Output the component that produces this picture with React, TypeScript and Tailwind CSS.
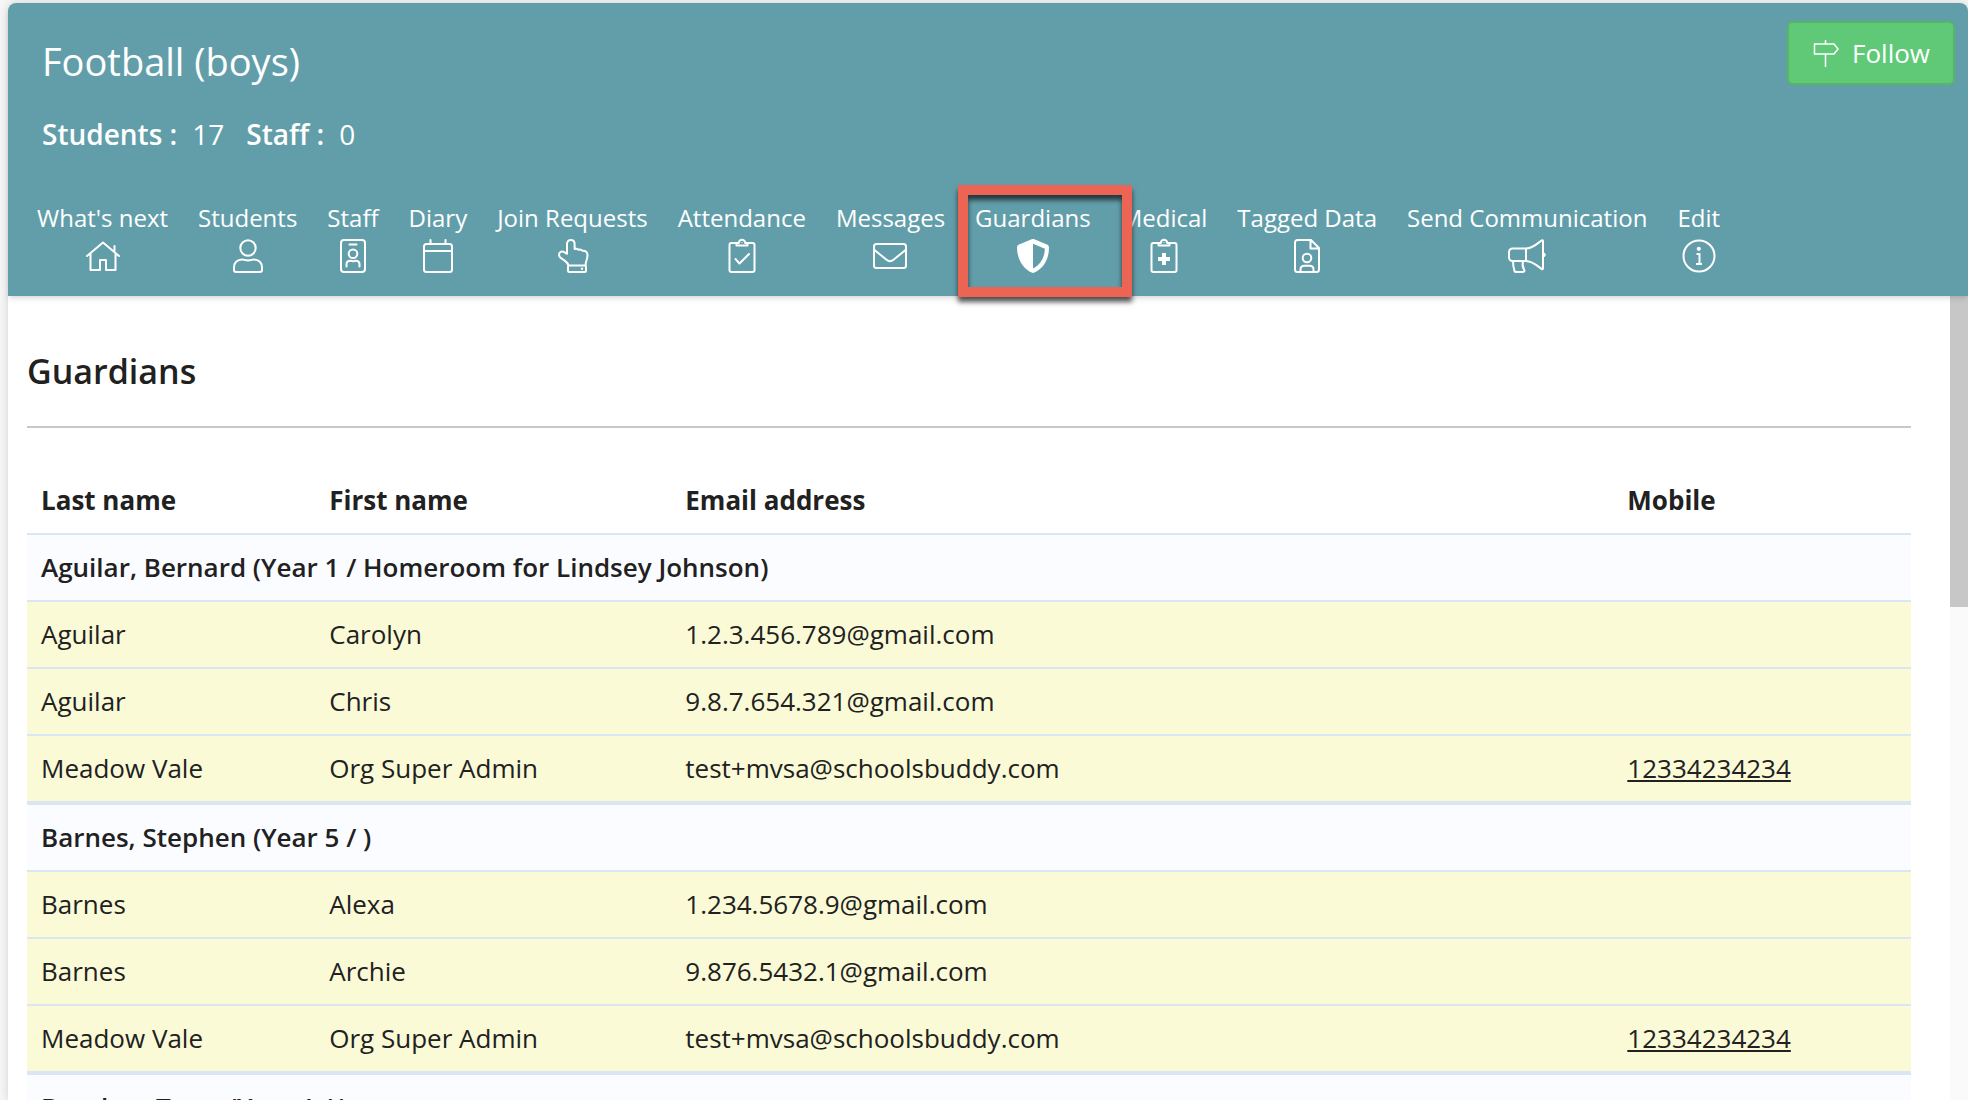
import type { ReactNode } from "react";

function Icon({ children, wide = false }: { children: ReactNode; wide?: boolean }) {
  return (
    <svg
      viewBox={wide ? "0 0 40 36" : "0 0 36 36"}
      className={wide ? "h-9 w-10" : "h-9 w-9"}
      fill="none"
      stroke="currentColor"
      strokeWidth="2"
      strokeLinecap="round"
      strokeLinejoin="round"
      aria-hidden="true"
    >
      {children}
    </svg>
  );
}

const clipboard = (
  <>
    <path d="M13 5H7.500a2 2 0 0 0-2 2v25a2 2 0 0 0 2 2h21a2 2 0 0 0 2-2V7a2 2 0 0 0-2-2H23" />
    <path d="M12.500 5v2.500h11V5h-2.300a3.200 3.200 0 0 0-6.400 0z" />
    <circle cx="18" cy="4.500" r="0.600" stroke="none" fill="currentColor" />
  </>
);

const navItems: { label: string; icon: ReactNode; active?: boolean }[] = [
  {
    label: "What's next",
    icon: (
      <Icon>
        <path d="M2 18 18 4.500 34 18M5.500 15.500V32h9.500V22h6v10h9.500V15.500M29.500 8v6" />
      </Icon>
    ),
  },
  {
    label: "Students",
    icon: (
      <Icon>
        <circle cx="18" cy="10" r="7.700" />
        <path d="M12 21.500c2 0 3 .9 6 .9s4-.9 6-.9c5 0 8 3.500 8 8V32a2 2 0 0 1-2 2H6a2 2 0 0 1-2-2v-2.500c0-4.500 3-8 8-8z" />
      </Icon>
    ),
  },
  {
    label: "Staff",
    icon: (
      <Icon>
        <rect x="6" y="2" width="24" height="32" rx="3" />
        <path d="M14.500 6.500h7" />
        <circle cx="18" cy="15.800" r="4.300" />
        <path d="M11.500 28.500v-2.300c0-2.300 1.700-3.500 3.800-3.500 1 0 1.700.5 2.700.5s1.700-.5 2.700-.5c2.100 0 3.800 1.200 3.800 3.500v2.300" />
      </Icon>
    ),
  },
  {
    label: "Diary",
    icon: (
      <Icon>
        <rect x="4" y="6" width="28" height="28" rx="2.500" />
        <path d="M4 13h28M10.500 2v4M25.500 2v4" />
      </Icon>
    ),
  },
  {
    label: "Join Requests",
    icon: (
      <Icon>
        <path d="M14.500 27.500c-.5-3-2.500-4-5-5.700C7 20.300 5 19.300 5 17c0-3 3-4.200 5.300-2.800l2.700 1.600V6c0-5.300 7.600-5.300 7.600 0v5c1.400-.6 3-.2 3.900.8 1.500-.5 3-.1 4 1 3.300-.2 5 1.400 5 4.400 0 4.500-2 6-2 10.300" />
        <rect x="14" y="27.500" width="18" height="6.500" rx="1.500" />
        <circle cx="28" cy="30.700" r="1.200" stroke="none" fill="currentColor" />
      </Icon>
    ),
  },
  {
    label: "Attendance",
    icon: (
      <Icon>
        {clipboard}
        <path d="m11.500 21 4 4.500 9.500-9.500" />
      </Icon>
    ),
  },
  {
    label: "Messages",
    icon: (
      <Icon>
        <rect x="2" y="6" width="32" height="24" rx="2.500" />
        <path d="m2.500 12 12 9.800c2.500 2 4.500 2 7 0l12-9.800" />
      </Icon>
    ),
  },
  {
    label: "Guardians",
    active: true,
    icon: (
      <Icon>
        <path
          d="M18 1c.5 0 .9.100 1.300.3L32 6.500c1.200.5 2 1.600 2 2.900 0 14.500-7.800 22-14.700 25.200-.8.4-1.800.4-2.600 0C9 31.200 2 22 2 9.400c0-1.300.8-2.400 2-2.900l12.700-5.200C17.100 1.100 17.500 1 18 1zm0 4.800v24.700c6.200-3.200 11.600-9.500 11.900-19.800z"
          fill="currentColor"
          fillRule="evenodd"
          stroke="none"
        />
      </Icon>
    ),
  },
  {
    label: "Medical",
    icon: (
      <Icon>
        {clipboard}
        <path d="M18 15v12M12 21h12" strokeWidth="4" strokeLinecap="butt" />
      </Icon>
    ),
  },
  {
    label: "Tagged Data",
    icon: (
      <Icon>
        <path d="M22 2H8.500a2.500 2.500 0 0 0-2.500 2.500v27A2.500 2.500 0 0 0 8.500 34h19a2.500 2.500 0 0 0 2.500-2.500V10zM21.500 2v8.500H30" />
        <circle cx="18" cy="20" r="4.300" />
        <path d="M11.500 34v-2.500c0-2.300 1.700-3.800 3.800-3.800h5.400c2.100 0 3.800 1.500 3.800 3.800V34" />
      </Icon>
    ),
  },
  {
    label: "Send Communication",
    icon: (
      <Icon wide>
        <path d="M19 10.500H5.500a3.500 3.500 0 0 0-3.500 3.500v5.500A3.500 3.500 0 0 0 5.500 23H19zM19 10.500c6 0 11-4.500 15.500-8 .8-.6 1.500-.3 1.500.7v27c0 1-.7 1.300-1.500.7C30 27.500 25 23 19 23" />
        <path d="M6 23c0 3.500.5 7 1.500 10 .3.700.8 1 1.500 1h7c1.400 0 1.800-1 1.200-2-1.400-2.500-2.200-5.500-1.200-9" />
        <path d="M36.500 14.500c2.500 1 2.500 3.700 0 4.700z" fill="currentColor" strokeWidth="1" />
      </Icon>
    ),
  },
  {
    label: "Edit",
    icon: (
      <Icon>
        <circle cx="18" cy="18" r="15.500" />
        <circle cx="17.800" cy="10.800" r="2.100" stroke="none" fill="currentColor" />
        <path d="M15.500 16h3v9.500M15 26h6" strokeLinecap="butt" />
      </Icon>
    ),
  },
];

type Guardian = { last: string; first: string; email: string; mobile?: string };

const groups: { student: string; guardians: Guardian[] }[] = [
  {
    student: "Aguilar, Bernard (Year 1 / Homeroom for Lindsey Johnson)",
    guardians: [
      { last: "Aguilar", first: "Carolyn", email: "1.2.3.456.789@gmail.com" },
      { last: "Aguilar", first: "Chris", email: "9.8.7.654.321@gmail.com" },
      { last: "Meadow Vale", first: "Org Super Admin", email: "test+mvsa@schoolsbuddy.com", mobile: "12334234234" },
    ],
  },
  {
    student: "Barnes, Stephen (Year 5 / )",
    guardians: [
      { last: "Barnes", first: "Alexa", email: "1.234.5678.9@gmail.com" },
      { last: "Barnes", first: "Archie", email: "9.876.5432.1@gmail.com" },
      { last: "Meadow Vale", first: "Org Super Admin", email: "test+mvsa@schoolsbuddy.com", mobile: "12334234234" },
    ],
  },
  { student: "Brooker, Terry (Year 1 / )", guardians: [] },
];

function Header() {
  return (
    <header className="relative z-10 rounded-t-lg bg-[#629eaa] pb-[22px] text-white shadow-md">
      <div className="flex items-start justify-between pt-[18px] pr-[13px] pl-[34px]">
        <div className="pt-3">
          <h1 className="text-[38px] leading-[56px]">Football (boys)</h1>
          <dl className="mt-[25px] flex text-[28px] leading-10">
            <dt className="font-semibold">Students :</dt>
            <dd className="mr-[22px] ml-[15px]">17</dd>
            <dt className="font-semibold">Staff :</dt>
            <dd className="ml-[15px]">0</dd>
          </dl>
        </div>
        <button
          type="button"
          className="flex h-16 items-center gap-3 rounded-md border-2 border-[#55b766] bg-[#60c978] px-[23px] text-[26px]"
        >
          <svg viewBox="0 0 28 28" className="h-7 w-7" fill="none" stroke="currentColor" strokeWidth="1.500" aria-hidden="true">
            <path d="M13.500 1v4M13.500 15V28M2.500 5h19.500l4 5-4 5H2.500z" />
          </svg>
          Follow
        </button>
      </div>
      <nav aria-label="Group sections" className="mt-[42px] pl-[14px]">
        <ul className="flex text-2xl leading-[44px]">
          {navItems.map((item) => (
            <li key={item.label} className="relative">
              <a href="#" aria-current={item.active ? "page" : undefined} className="flex flex-col items-center px-[15px] whitespace-nowrap">
                {item.label}
                <span className="-mt-[2px]">{item.icon}</span>
              </a>
              {item.active && (
                <span className="pointer-events-none absolute -top-[11px] -left-[2px] z-10 h-28 w-[174px] border-10 border-[#ec6453] shadow-[0_5px_5px_rgba(0,0,0,0.65),inset_0_5px_5px_rgba(0,0,0,0.65)]" />
              )}
            </li>
          ))}
        </ul>
      </nav>
    </header>
  );
}

function GuardianTable() {
  return (
    <table className="mt-10 w-full table-fixed border-separate border-spacing-0 text-left text-[26px] leading-[39px]">
      <colgroup>
        <col className="w-[15.300%]" />
        <col className="w-[18.900%]" />
        <col className="w-[50%]" />
        <col />
      </colgroup>
      <thead>
        <tr>
          {["Last name", "First name", "Email address", "Mobile"].map((title) => (
            <th key={title} scope="col" className="border-b-2 border-[#dbe6f5] px-[14px] py-[13px] font-bold">
              {title}
            </th>
          ))}
        </tr>
      </thead>
      {groups.map((group) => (
        <tbody key={group.student}>
          <tr className="bg-[#fbfcff]">
            <th scope="rowgroup" colSpan={4} className="border-b-2 border-[#dbe6f5] px-[14px] py-[13px] font-semibold">
              {group.student}
            </th>
          </tr>
          {group.guardians.map((g) => (
            <tr
              key={g.email}
              className="bg-[#fafad7] *:border-b-2 *:border-[#dbe6f5] *:px-[14px] *:py-[13px] last:*:border-b-4"
            >
              <td>{g.last}</td>
              <td>{g.first}</td>
              <td>{g.email}</td>
              <td>
                {g.mobile && (
                  <a href={"tel:" + g.mobile} className="underline decoration-2 underline-offset-2">
                    {g.mobile}
                  </a>
                )}
              </td>
            </tr>
          ))}
        </tbody>
      ))}
    </table>
  );
}

export default function App() {
  return (
    <div className="flex h-screen flex-col overflow-hidden bg-[#f6f6f6] pt-[3px] pl-2 font-['Open_Sans',sans-serif] text-[#212121]">
      <div className="flex min-h-0 flex-1 flex-col rounded-t-lg bg-white shadow-[0_0_10px_rgba(0,0,0,0.15)]">
        <Header />
        <div className="flex min-h-0 flex-1">
          <main className="min-w-0 flex-1 overflow-hidden pr-[39px] pl-[19px]">
            <h2 className="border-b-2 border-[#c8c8c8] pt-[50px] pb-[30px] text-[34px] leading-[50px] font-semibold">Guardians</h2>
            <GuardianTable />
          </main>
          <div aria-hidden="true" className="w-[18px] bg-[#fafafa]">
            <div className="h-[311px] bg-[#c7c7c7]" />
          </div>
        </div>
      </div>
    </div>
  );
}
